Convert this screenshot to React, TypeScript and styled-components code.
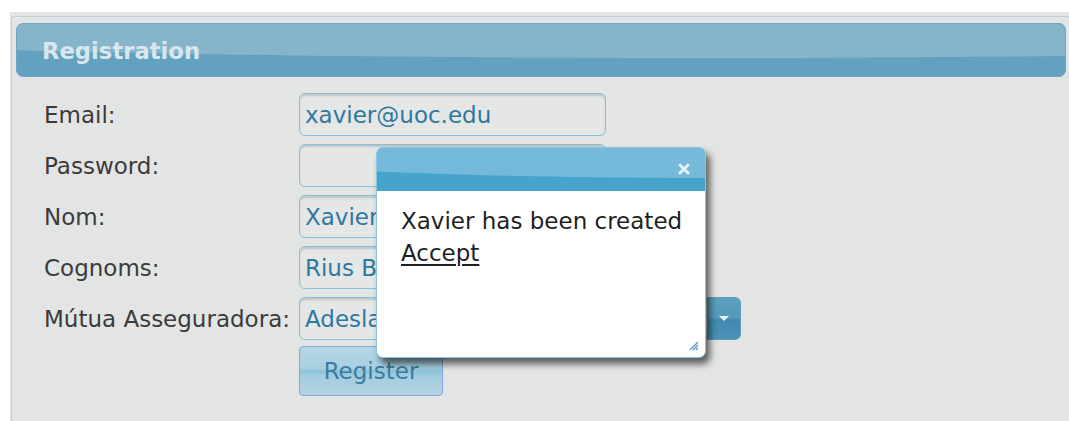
import { Fragment } from "react";
import styled, { createGlobalStyle } from "styled-components";

const GlobalStyle = createGlobalStyle`
  html, body {
    margin: 0;
    padding: 0;
    background: #ffffff;
    overflow: hidden;
    font-family: "DejaVu Sans", Verdana, sans-serif;
  }
`;

const Page = styled.div`
  position: relative;
  height: 100vh;
  padding: 12px 0 0 10px;
  box-sizing: border-box;
`;

const Backdrop = styled.div`
  height: 100%;
  background: #e3e5e4;
  padding: 4px 0 0 1px;
  box-sizing: border-box;
`;

const Panel = styled.div`
  width: 1050px;
  height: 100%;
  padding: 6px 4px;
  border: 1px solid #bfcfdc;
  border-bottom: none;
  border-radius: 4px 4px 0 0;
  background: #e3e5e4;
`;

const Header = styled.div`
  position: relative;
  height: 54px;
  box-sizing: border-box;
  display: flex;
  align-items: center;
  padding-left: 25px;
  border: 1px solid #6fa6c5;
  border-radius: 7px;
  background: #62a2c0;
  overflow: hidden;

  /* glossy upper band */
  &::before {
    content: "";
    position: absolute;
    left: -716px;
    top: -86px;
    width: 2800px;
    height: 120px;
    border-radius: 50%;
    background: #86b5ca;
  }
`;

const Title = styled.h1`
  position: relative;
  margin: 2px 0 0;
  font-size: 22.7px;
  font-weight: bold;
  color: #d9e6ec;
`;

const Form = styled.div`
  display: grid;
  grid-template-columns: 255px auto;
  grid-auto-rows: 43px;
  row-gap: 8px;
  align-items: center;
  justify-items: start;
  padding: 16px 0 0 28px;
`;

const Label = styled.span`
  font-size: 23px;
  color: #3b3b3b;
  white-space: nowrap;
`;

const Field = styled.div<{ $width?: number }>`
  width: ${(p) => p.$width ?? 307}px;
  height: 43px;
  box-sizing: border-box;
  display: flex;
  align-items: center;
  padding-left: 5px;
  border: 1px solid #80c3e0;
  border-radius: 6px;
  background: #e5e7e6;
  box-shadow: inset 0 2px 2px rgba(0, 0, 0, 0.16);
  font-size: 23px;
  color: #2f78a0;
  white-space: nowrap;
  overflow: hidden;
`;

const SelectBox = styled.div`
  display: flex;
  align-items: stretch;
  height: 43px;
`;

const DropButton = styled.div`
  width: 34px;
  box-sizing: border-box;
  display: flex;
  align-items: center;
  justify-content: center;
  margin-left: -1px;
  border: 1px solid #5a9dbd;
  border-radius: 0 6px 6px 0;
  background: linear-gradient(#5c9fbe 0%, #5599ba 50%, #4189b0 52%, #4b92b6 100%);
`;

const Caret = styled.span`
  width: 0;
  height: 0;
  border-left: 5px solid transparent;
  border-right: 5px solid transparent;
  border-top: 5px solid #e6f0f5;
`;

const RegisterButton = styled.button`
  grid-column: 2;
  width: 144px;
  height: 50px;
  margin-top: 2px;
  border: 1px solid #84a6d8;
  border-radius: 4px;
  background: linear-gradient(
    #b4d7e6 0%,
    #a8d0e1 44%,
    #8cc3da 50%,
    #a4cde0 62%,
    #b2d4e3 100%
  );
  font-family: inherit;
  font-size: 23px;
  color: #3b7c9e;
  padding: 0;
`;

const Dialog = styled.div`
  position: absolute;
  left: 376px;
  top: 147px;
  width: 330px;
  height: 211px;
  box-sizing: border-box;
  display: flex;
  flex-direction: column;
  border: 1px solid #8ec3dc;
  border-radius: 7px;
  background: #ffffff;
  box-shadow: 4px 6px 7px rgba(0, 0, 0, 0.6);
  overflow: hidden;
`;

const DialogBar = styled.div`
  position: relative;
  height: 43px;
  flex-shrink: 0;
  display: flex;
  justify-content: flex-end;
  align-items: center;
  padding-right: 15px;
  background: #45a3cc;
  overflow: hidden;

  &::before {
    content: "";
    position: absolute;
    left: -270px;
    top: -50px;
    width: 1200px;
    height: 80px;
    border-radius: 50%;
    background: #74b9da;
  }
`;

const CloseIcon = styled.svg`
  position: relative;
  margin-bottom: 2px;
`;

const DialogBody = styled.div`
  position: relative;
  flex: 1;
  padding: 14px 0 0 24px;
  font-size: 23px;
  line-height: 32px;
  color: #1f1f1f;
`;

const AcceptLink = styled.a`
  color: #1f1f1f;
  text-decoration: underline;
  text-underline-offset: 3px;
`;

const Grip = styled.svg`
  position: absolute;
  right: 6px;
  bottom: 6px;
`;

const rows = [
  { label: "Email:", value: "xavier@uoc.edu" },
  { label: "Password:", value: "" },
  { label: "Nom:", value: "Xavier" },
  { label: "Cognoms:", value: "Rius B" },
];

export default function App() {
  return (
    <Page>
      <GlobalStyle />
      <Backdrop>
        <Panel>
          <Header>
            <Title>Registration</Title>
          </Header>
          <Form>
            {rows.map((row) => (
              <Fragment key={row.label}>
                <Label>{row.label}</Label>
                <Field>{row.value}</Field>
              </Fragment>
            ))}
            <Label>Mútua Asseguradora:</Label>
            <SelectBox>
              <Field $width={409}>Adeslas</Field>
              <DropButton>
                <Caret />
              </DropButton>
            </SelectBox>
            <RegisterButton>Register</RegisterButton>
          </Form>
        </Panel>
      </Backdrop>

      <Dialog>
        <DialogBar>
          <CloseIcon width="12" height="12" viewBox="0 0 12 12">
            <path
              d="M2 2 L10 10 M10 2 L2 10"
              stroke="#e4f0f6"
              strokeWidth="3"
              strokeLinecap="round"
            />
          </CloseIcon>
        </DialogBar>
        <DialogBody>
          Xavier has been created
          <br />
          <AcceptLink href="#">Accept</AcceptLink>
          <Grip width="10" height="10" viewBox="0 0 10 10">
            <path
              d="M9 1 L1 9 M9 4 L4 9 M9 7 L7 9"
              stroke="#4f9cc6"
              strokeWidth="1.3"
            />
          </Grip>
        </DialogBody>
      </Dialog>
    </Page>
  );
}
